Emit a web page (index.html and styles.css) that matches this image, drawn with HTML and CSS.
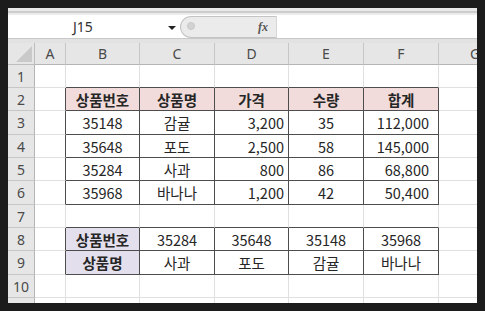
FILE: index.html
```html
<!DOCTYPE html>
<html lang="ko">
<head>
  <meta charset="UTF-8" />
  <title>J15</title>
  <link rel="stylesheet" href="styles.css">
</head>
<body>
  <div class="window">
    <div class="ribbon-edge"></div>
    <div class="formula-bar">
      <div class="name-box">J15<span class="caret"></span></div>
      <div class="fx-area"><span class="grip"></span><span class="fx">fx</span></div>
      <div class="fx-input"></div>
    </div>
    <div class="bar-gap"></div>

    <div class="sheet">
      <!-- column headers -->
      <div class="corner"><span class="tri"></span></div>
      <div class="ch">A</div><div class="ch">B</div><div class="ch">C</div><div class="ch">D</div><div class="ch">E</div><div class="ch">F</div><div class="ch g">G</div>

      <!-- row 1 -->
      <div class="rh">1</div>
      <div class="c"></div><div class="c ab"></div><div class="c ab"></div><div class="c ab"></div><div class="c ab"></div><div class="c ab"></div><div class="c"></div>

      <!-- row 2 -->
      <div class="rh">2</div>
      <div class="c lt"></div>
      <div class="c t hd">상품번호</div><div class="c t hd">상품명</div><div class="c t hd">가격</div><div class="c t hd">수량</div><div class="c t hd">합계</div>
      <div class="c"></div>

      <!-- row 3 -->
      <div class="rh">3</div>
      <div class="c lt"></div>
      <div class="c t">35148</div><div class="c t">감귤</div><div class="c t num">3,200</div><div class="c t">35</div><div class="c t num2">112,000</div>
      <div class="c"></div>

      <!-- row 4 -->
      <div class="rh">4</div>
      <div class="c lt"></div>
      <div class="c t">35648</div><div class="c t">포도</div><div class="c t num">2,500</div><div class="c t">58</div><div class="c t num2">145,000</div>
      <div class="c"></div>

      <!-- row 5 -->
      <div class="rh">5</div>
      <div class="c lt"></div>
      <div class="c t">35284</div><div class="c t">사과</div><div class="c t num">800</div><div class="c t">86</div><div class="c t num2">68,800</div>
      <div class="c"></div>

      <!-- row 6 -->
      <div class="rh">6</div>
      <div class="c lt"></div>
      <div class="c t">35968</div><div class="c t">바나나</div><div class="c t num">1,200</div><div class="c t">42</div><div class="c t num2">50,400</div>
      <div class="c"></div>

      <!-- row 7 -->
      <div class="rh">7</div>
      <div class="c"></div><div class="c ab"></div><div class="c ab"></div><div class="c ab"></div><div class="c ab"></div><div class="c ab"></div><div class="c"></div>

      <!-- row 8 -->
      <div class="rh">8</div>
      <div class="c lt"></div>
      <div class="c t lab">상품번호</div><div class="c t">35284</div><div class="c t">35648</div><div class="c t">35148</div><div class="c t">35968</div>
      <div class="c"></div>

      <!-- row 9 -->
      <div class="rh">9</div>
      <div class="c lt"></div>
      <div class="c t lab">상품명</div><div class="c t">사과</div><div class="c t">포도</div><div class="c t">감귤</div><div class="c t">바나나</div>
      <div class="c"></div>

      <!-- row 10 -->
      <div class="rh">10</div>
      <div class="c"></div><div class="c"></div><div class="c"></div><div class="c"></div><div class="c"></div><div class="c"></div><div class="c"></div>

      <!-- row 11, only its top edge shows -->
      <div class="rh"></div>
      <div class="c"></div><div class="c"></div><div class="c"></div><div class="c"></div><div class="c"></div><div class="c"></div><div class="c"></div>
    </div>
  </div>
</body>
</html>
```

FILE: styles.css
```css
body {
  margin: 0;
  padding: 8px 0 0 8px;
  background: #1c1c1c;
  height: 311px;
  box-sizing: border-box;
  overflow: hidden;
}

.window {
  width: 469px;
  height: 295px;
  background: #fff;
  overflow: hidden;
}

.ribbon-edge {
  height: 7px;
  background: linear-gradient(#e8e8e8 0 3px, #cdcdcd 3px 5px, #ececec 5px);
}

.formula-bar {
  display: flex;
  height: 23px;
  background: #fff;
}

.name-box {
  width: 172px;
  padding-left: 65px;
  box-sizing: border-box;
  display: flex;
  align-items: center;
  font-family: "Noto Sans", sans-serif;
  font-size: 14px;
  color: #333;
  position: relative;
}

.caret {
  position: absolute;
  left: 160px;
  top: 11px;
  border-left: 4px solid transparent;
  border-right: 4px solid transparent;
  border-top: 4px solid #222;
}

.fx-area {
  width: 97px;
  margin-top: 1px;
  background: #ebebeb;
  border: 1px solid #c4c4c4;
  border-right-color: #d6d6d6;
  border-radius: 11px 0 0 11px;
  box-sizing: border-box;
  display: flex;
  align-items: center;
  justify-content: space-between;
  padding: 0 8px 0 6px;
}

.grip {
  width: 6px;
  height: 6px;
  border-radius: 50%;
  background: #d2d2d2;
  border: 1px solid #c8c8c8;
  margin-top: -2px;
}

.fx {
  font-family: "Liberation Serif", serif;
  font-style: italic;
  font-weight: bold;
  font-size: 12px;
  color: #555;
}

.fx-input {
  flex: 1;
  background: #fff;
}

.bar-gap {
  height: 5px;
  background: #e2e2e2;
  border-top: 1px solid #c9c9c9;
  box-sizing: border-box;
}

.sheet {
  display: grid;
  grid-template-columns: 27px 31px 74px 75px 74px 75px 75px 75px;
  grid-template-rows: 22px 23px 23px 24px 23px 23px 24px 23px 23px 24px 23px 23px;
  font-family: "Noto Sans CJK KR", sans-serif;
  font-size: 14.5px;
  color: #262626;
}

.sheet > div {
  box-sizing: border-box;
  display: flex;
  align-items: center;
  justify-content: center;
  white-space: nowrap;
}

.corner {
  background: #e6e6e6;
  border-right: 1px solid #bdbdbd;
  border-bottom: 1px solid #bdbdbd;
  position: relative;
}

.tri {
  position: absolute;
  right: 2px;
  bottom: 2px;
  border-left: 16px solid transparent;
  border-bottom: 16px solid #c9c9c9;
}

.ch, .rh {
  background: #e6e6e6;
  font-family: "Noto Sans", sans-serif;
  font-size: 14px;
  color: #4a4a4a;
}

.ch {
  border-right: 1px solid #c6c6c6;
  border-bottom: 1px solid #b5b5b5;
}

/* column G is cut by the window edge, its letter shows only in part */
.sheet > .g {
  justify-content: flex-start;
  padding-left: 31px;
}

.rh {
  border-right: 1px solid #b5b5b5;
  border-bottom: 1px solid #c6c6c6;
}

.c {
  border-right: 1px solid #e0e0e0;
  border-bottom: 1px solid #e0e0e0;
}

.c.t {
  border-right-color: #4d4d4d;
  border-bottom-color: #4d4d4d;
}

.c.lt {
  border-right-color: #4d4d4d;
}

.c.ab {
  border-bottom-color: #4d4d4d;
}

.hd {
  background: #f2dcdb;
  font-weight: bold;
}

.lab {
  background: #e4dfec;
  font-weight: bold;
}

.sheet > .num {
  justify-content: flex-end;
  padding-right: 4px;
}

.sheet > .num2 {
  justify-content: flex-end;
  padding-right: 9px;
}
```
